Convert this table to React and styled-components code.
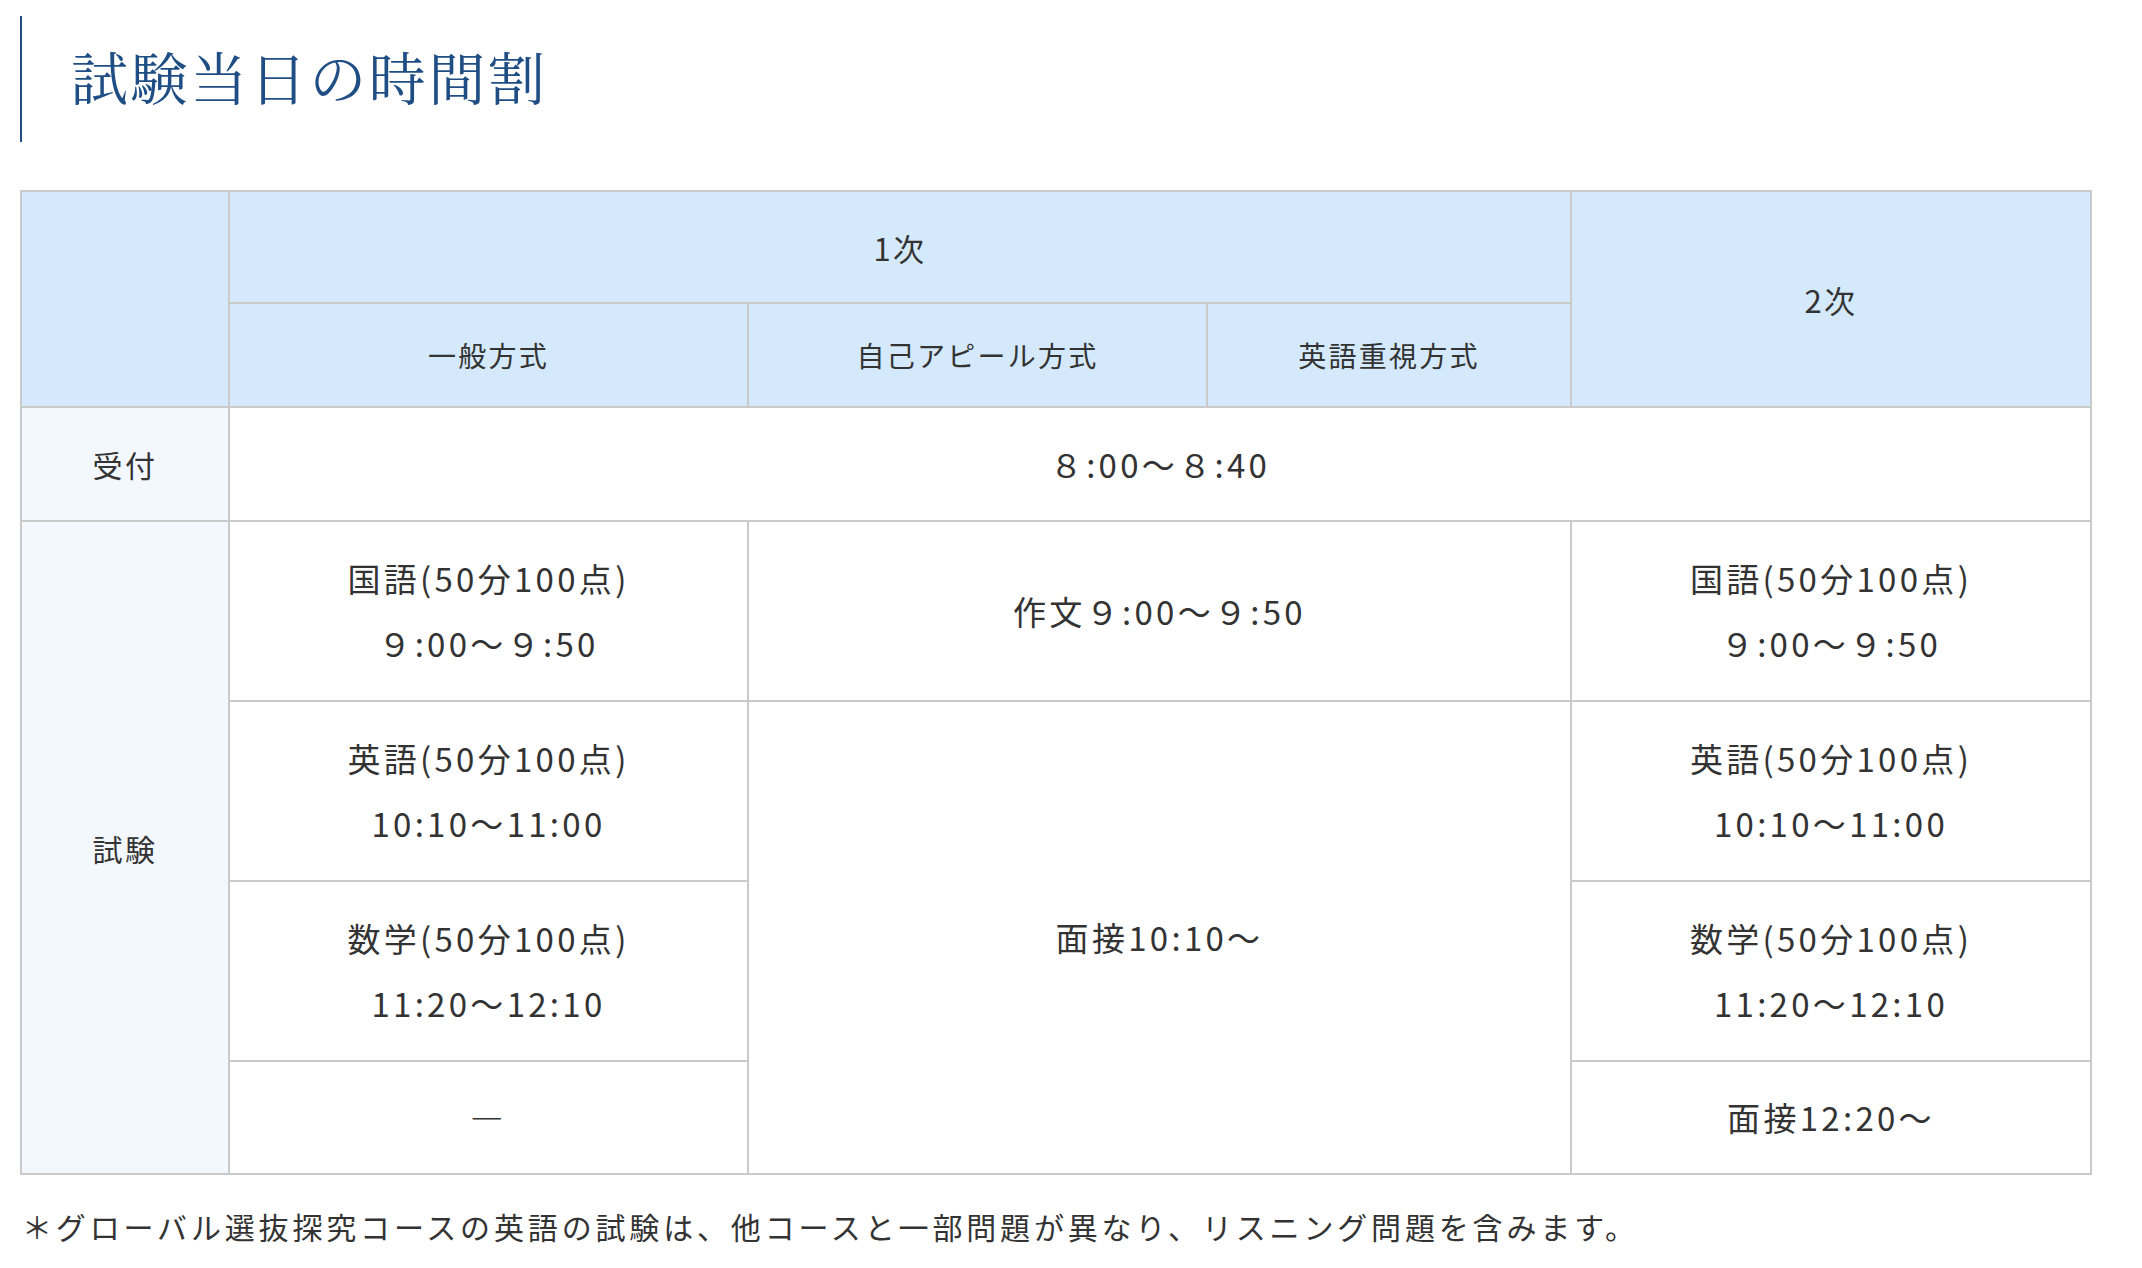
import React from 'react';
import styled, { createGlobalStyle } from 'styled-components';

const GlobalStyle = createGlobalStyle`
  html, body {
    margin: 0;
    padding: 0;
    background: #ffffff;
  }
  body {
    font-family: 'Noto Sans CJK JP', 'Noto Sans', sans-serif;
    color: #333333;
  }
`;

const Page = styled.div`
  width: 2070px;
  padding: 16px 0 40px 20px;
`;

const Heading = styled.h2`
  margin: 0;
  height: 126px;
  box-sizing: border-box;
  display: flex;
  align-items: center;
  padding: 0 0 8px 49px;
  border-left: 2px solid #1f4e85;
  font-family: 'Noto Serif CJK JP', 'Liberation Serif', 'Noto Sans CJK JP', serif;
  font-size: 57px;
  font-weight: 400;
  letter-spacing: 0.045em;
  color: #1f4e85;
`;

const Table = styled.table`
  margin-top: 48px;
  width: 2070px;
  table-layout: fixed;
  border-collapse: collapse;
  border: 2px solid #cacaca;
`;

const Cell = styled.td`
  border: 2px solid #cacaca;
  text-align: center;
  vertical-align: middle;
  padding: 0;
  height: ${p => p.$h || 112}px;
  font-size: 33px;
  line-height: 65px;
  letter-spacing: 0.1em;
  background: #ffffff;
  color: #333333;
`;

const HeadCell = styled.th`
  border: 2px solid #cacaca;
  text-align: center;
  vertical-align: middle;
  padding: 0;
  height: ${p => p.$h || 102}px;
  font-size: ${p => p.$size || 28}px;
  font-weight: 400;
  letter-spacing: 0.08em;
  background: #d5e9fc;
  color: #333333;
`;

const LabelCell = styled.th`
  border: 2px solid #cacaca;
  text-align: center;
  vertical-align: middle;
  padding: 0;
  font-size: 30px;
  font-weight: 400;
  letter-spacing: 0.08em;
  background: #f3f8ff;
  color: #333333;
`;

const Line = styled.div`
  white-space: nowrap;
`;

const Note = styled.p`
  margin: 24px 0 0 2px;
  font-size: 30px;
  line-height: 54px;
  letter-spacing: 0.128em;
  color: #333333;
`;

const colWidths = [208, 519, 459, 364, 520];

function Slot({ lines, ...rest }) {
  return (
    <Cell $h={178} {...rest}>
      {lines.map(l => <Line key={l}>{l}</Line>)}
    </Cell>
  );
}

export default function App() {
  return (
    <>
      <GlobalStyle />
      <Page>
        <Heading>試験当日の時間割</Heading>
        <Table>
          <colgroup>
            {colWidths.map((w, i) => <col key={i} style={{ width: w }} />)}
          </colgroup>
          <thead>
            <tr>
              <HeadCell rowSpan={2} />
              <HeadCell colSpan={3} $h={110} $size={31}>1次</HeadCell>
              <HeadCell rowSpan={2} $size={31}>2次</HeadCell>
            </tr>
            <tr>
              <HeadCell>一般方式</HeadCell>
              <HeadCell>自己アピール方式</HeadCell>
              <HeadCell>英語重視方式</HeadCell>
            </tr>
          </thead>
          <tbody>
            <tr>
              <LabelCell>受付</LabelCell>
              <Cell colSpan={4} $h={112}>８:00〜８:40</Cell>
            </tr>
            <tr>
              <LabelCell rowSpan={4}>試験</LabelCell>
              <Slot lines={['国語(50分100点)', '９:00〜９:50']} />
              <Cell colSpan={2} $h={178}>作文９:00〜９:50</Cell>
              <Slot lines={['国語(50分100点)', '９:00〜９:50']} />
            </tr>
            <tr>
              <Slot lines={['英語(50分100点)', '10:10〜11:00']} />
              <Cell colSpan={2} rowSpan={3}>面接10:10〜</Cell>
              <Slot lines={['英語(50分100点)', '10:10〜11:00']} />
            </tr>
            <tr>
              <Slot lines={['数学(50分100点)', '11:20〜12:10']} />
              <Slot lines={['数学(50分100点)', '11:20〜12:10']} />
            </tr>
            <tr>
              <Cell $h={111}>―</Cell>
              <Cell $h={111}>面接12:20〜</Cell>
            </tr>
          </tbody>
        </Table>
        <Note>＊グローバル選抜探究コースの英語の試験は、他コースと一部問題が異なり、リスニング問題を含みます。</Note>
      </Page>
    </>
  );
}
